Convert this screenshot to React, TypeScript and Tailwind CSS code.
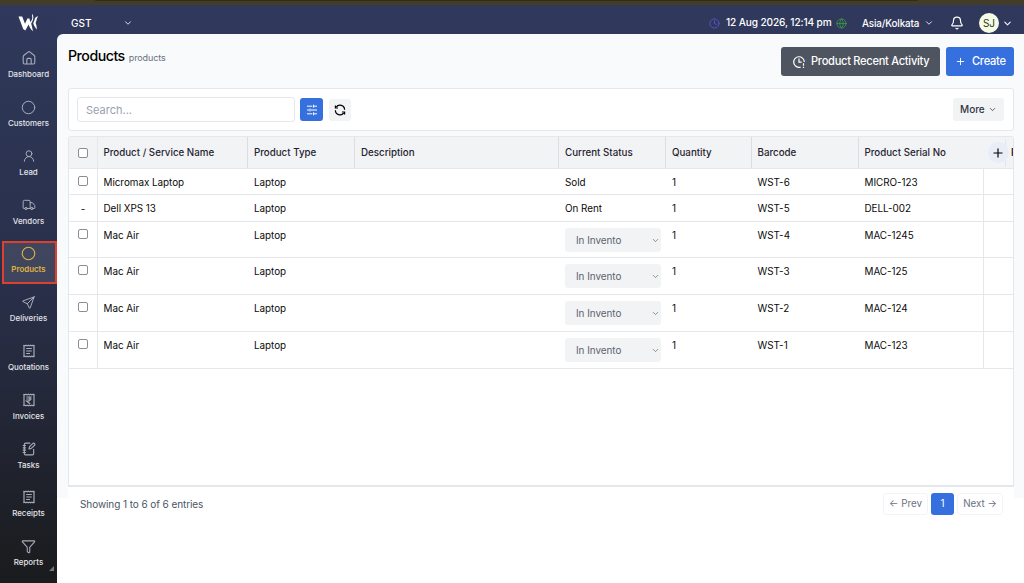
import type { ReactNode } from 'react';
import { Bell, ChevronDown, Circle, Clock, Funnel, Globe, NotebookPen, Plus, Truck, UserRound } from 'lucide-react';
import { TbSend } from 'react-icons/tb';

interface Product {
  name: string;
  status: string;
  barcode: string;
  serial: string;
  selectable: boolean;
  editable: boolean;
}

const products: Product[] = [
  { name: 'Micromax Laptop', status: 'Sold', barcode: 'WST-6', serial: 'MICRO-123', selectable: true, editable: false },
  { name: 'Dell XPS 13', status: 'On Rent', barcode: 'WST-5', serial: 'DELL-002', selectable: false, editable: false },
  { name: 'Mac Air', status: 'In Invento', barcode: 'WST-4', serial: 'MAC-1245', selectable: true, editable: true },
  { name: 'Mac Air', status: 'In Invento', barcode: 'WST-3', serial: 'MAC-125', selectable: true, editable: true },
  { name: 'Mac Air', status: 'In Invento', barcode: 'WST-2', serial: 'MAC-124', selectable: true, editable: true },
  { name: 'Mac Air', status: 'In Invento', barcode: 'WST-1', serial: 'MAC-123', selectable: true, editable: true },
];

const columns = ['Product / Service Name', 'Product Type', 'Description', 'Current Status', 'Quantity', 'Barcode'];

const grid = 'grid grid-cols-[28.5px_150.5px_107px_204px_107px_85.5px_107px_125.5px_30px]';

function Logo() {
  return (
    <svg width="21" height="19" viewBox="0 0 21 19" fill="white">
      <path d="M0.5 3.4H4.2L7 10.8L9.4 5.6H11.4L12.4 9.2L14 6.4C14.6 4.6 14.2 3.4 14 2.4L14.3 0.8C15.8 3.4 15.6 6 14.4 8.2L13.2 10.4L15 18.2C12.6 16.2 11.4 13.6 10.6 11.4L7.3 17.4L5.2 16Z" />
      <path d="M20.3 3.2C17.8 3.6 16.8 5 16.4 7.4L15.2 10.2C16 12.6 17 14.6 19 16.4C18.6 13.6 18.4 11.6 17.6 10C18.8 7.8 18.4 5 20.3 3.2Z" />
    </svg>
  );
}

function HomeIcon() {
  return (
    <svg width="14" height="14" viewBox="0 0 14 14" fill="none" stroke="currentColor" strokeWidth="1.1" strokeLinejoin="round">
      <path d="M1.2 5.8C1.2 5.1 1.5 4.7 2 4.3L6 1.1C6.6 .6 7.4 .6 8 1.1L12 4.3C12.5 4.7 12.8 5.1 12.8 5.8V11.6C12.8 12.5 12.3 13 11.4 13H2.6C1.7 13 1.2 12.5 1.2 11.6Z" />
      <path d="M4.8 13V8.7C4.8 7.8 5.2 7.4 6 7.4H8C8.8 7.4 9.2 7.8 9.2 8.7V13" />
    </svg>
  );
}

function ReceiptIcon({ rupee = false }: { rupee?: boolean }) {
  return (
    <svg width="14" height="14" viewBox="0 0 14 14" fill="none" stroke="currentColor" strokeWidth="1.15">
      <path d="M2 1.3V12.7M12 1.3V12.7" />
      <path d="M1.5 1.2L2.7 1.9L3.9 1.2L5.1 1.9L6.3 1.2L7.5 1.9L8.7 1.2L9.9 1.9L11.1 1.2L12.4 1.9M1.5 12.8L2.7 12.1L3.9 12.8L5.1 12.1L6.3 12.8L7.5 12.1L8.7 12.8L9.9 12.1L11.1 12.8L12.4 12.1" />
      {rupee ? <path d="M4.3 4H9.7M4.3 6H9.7M4.5 4H6C9 4 9 8 6 8H4.5L8.2 11" /> : <path d="M4.2 4.5H9.8M4.2 7H9.8M4.2 9.5H8" />}
    </svg>
  );
}

function SlidersIcon() {
  return (
    <svg width="12" height="12" viewBox="0 0 12 12" fill="none" stroke="currentColor" strokeWidth="1">
      <path d="M1 2.2H6.3M8 2.2H11M1 6H3.3M5 6H11M1 9.8H6.3M8 9.8H11M7.6 .7V3.7M4 4.5V7.5M7.6 8.3V11.3" />
    </svg>
  );
}

function RefreshIcon() {
  return (
    <svg width="12" height="12" viewBox="0 0 12 12" fill="none" stroke="currentColor" strokeWidth="1.2">
      <path d="M2.2 3.2A4.6 4.6 0 0 1 10.6 5.8M9.8 8.8A4.6 4.6 0 0 1 1.4 6.2" />
      <path d="M1.4 1.5V4H4M10.6 10.5V8H8" />
    </svg>
  );
}

function ActivityIcon() {
  return (
    <svg width="14" height="14" viewBox="0 0 14 14" fill="none" stroke="currentColor" strokeWidth="1.2">
      <path d="M8.6 12.1A5.3 5.3 0 1 1 12.3 7M7 3.5V7.2H9.7" />
      <path d="M11.5 8.3V10.7M11.5 11.7V13" />
    </svg>
  );
}

interface NavItemProps {
  label: string;
  icon: ReactNode;
  active?: boolean;
}

function NavItem({ label, icon, active = false }: NavItemProps) {
  return (
    <a
      className={
        active
          ? 'flex h-[48.8px] flex-col items-center pt-[6px] text-[#e0b341]'
          : 'flex h-[48.8px] flex-col items-center pt-[6px] text-[#a9adba]'
      }
    >
      <span className="flex h-[14px] items-center">{icon}</span>
      <span className={active ? 'mt-[3px] text-[7.9px]/[12px] font-semibold' : 'mt-[3px] text-[7.9px]/[12px] font-medium text-[#e3e4e8]'}>{label}</span>
    </a>
  );
}

function Sidebar() {
  return (
    <aside className="relative w-[57px] shrink-0 bg-linear-to-b from-[#30395c] via-[#292f49] via-50% to-[#1a1b1d]">
      <div className="flex h-[40.3px] justify-center pt-[8px]">
        <Logo />
      </div>
      <nav>
        <NavItem label="Dashboard" icon={<HomeIcon />} />
        <NavItem label="Customers" icon={<Circle size={15} strokeWidth={1.6} />} />
        <NavItem label="Lead" icon={<UserRound size={14} strokeWidth={1.7} />} />
        <NavItem label="Vendors" icon={<Truck size={14} strokeWidth={1.7} />} />
        <div className="relative">
          <div className="absolute top-[1px] left-[2px] h-[43px] w-[55px] border-2 border-[#dd402c] bg-white/10" />
          <div className="relative">
            <NavItem label="Products" icon={<Circle size={15} strokeWidth={1.8} />} active />
          </div>
        </div>
        <NavItem label="Deliveries" icon={<TbSend size={15} strokeWidth={1.6} />} />
        <NavItem label="Quotations" icon={<ReceiptIcon />} />
        <NavItem label="Invoices" icon={<ReceiptIcon rupee />} />
        <NavItem label="Tasks" icon={<NotebookPen size={14} strokeWidth={1.9} />} />
        <NavItem label="Receipts" icon={<ReceiptIcon />} />
        <NavItem label="Reports" icon={<Funnel size={15} strokeWidth={1.7} />} />
      </nav>
      <svg className="absolute right-[3px] bottom-[12px]" width="5" height="5" viewBox="0 0 5 5">
        <path d="M5 0V5H0Z" fill="#777" />
      </svg>
    </aside>
  );
}

function TopBar() {
  return (
    <header className="flex h-[29px] items-center bg-[#30395c] pt-[7px] pr-[11px] pl-[14px] text-[10px] text-white">
      <span className="w-[52px] font-medium">GST</span>
      <ChevronDown size={10} strokeWidth={2} />
      <div className="ml-auto flex items-center">
        <Clock size={11} strokeWidth={2} className="text-[#5954cf]" />
        <span className="ml-[6px] w-[106px] text-[10.1px] font-medium tracking-[-0.12px] whitespace-nowrap">12 Aug 2026, 12:14 pm</span>
        <Globe size={11} strokeWidth={1.9} className="ml-[4px] text-[#3d9446]" />
        <span className="ml-[15px] w-[62px] text-[9.9px] font-medium tracking-[-0.15px]">Asia/Kolkata</span>
        <ChevronDown size={10} strokeWidth={2} />
        <Bell size={14} strokeWidth={2} className="ml-[16px]" />
        <span className="ml-[15px] flex size-[20px] items-center justify-center rounded-full bg-[#f4fce3] text-[10px] text-[#333]">SJ</span>
        <ChevronDown size={11} strokeWidth={2.2} className="ml-[3px]" />
      </div>
    </header>
  );
}

function Checkbox() {
  return <input type="checkbox" className="block size-[10px] appearance-none rounded-[2px] border border-[#8e8e92] bg-white" />;
}

function TableHeader() {
  return (
    <div className={`${grid} h-[32px] border-b border-gray-200 bg-[#f2f3f5] text-[9.75px] font-medium text-[#1f2430]`}>
      <div className="flex items-center border-r border-gray-200 pl-[9px]">
        <Checkbox />
      </div>
      {columns.map((column) => (
        <div key={column} className="flex items-center border-r-[1.5px] border-[#dcdde1] pt-px pl-[6px]">
          {column}
        </div>
      ))}
      <div className="flex items-center pt-px pl-[6px]">Product Serial No</div>
      <div className="relative flex items-center">
        <span className="absolute top-[2px] left-[21px] h-[28px] w-px bg-gray-200" />
        <span className="absolute left-[3.5px] flex size-[21px] items-center justify-center rounded-full bg-[#e8edf8] text-black">
          <Plus size={14} strokeWidth={2} />
        </span>
        <span className="absolute left-[27px] pt-px font-semibold">P</span>
      </div>
    </div>
  );
}

function TableRow({ product }: { product: Product }) {
  return (
    <div
      className={
        product.editable
          ? `${grid} h-[36.7px] border-b border-gray-200 text-[9.9px]/[15px] tracking-[-0.03px] text-[#0a0a0a]`
          : `${grid} h-[26.4px] border-b border-gray-200 text-[9.9px]/[15px] tracking-[-0.03px] text-[#0a0a0a]`
      }
    >
      <div className="border-r border-gray-200 pt-[7px] pl-[9px]">
        {product.selectable ? <Checkbox /> : <span className="block w-[10px] text-center leading-[14px]">-</span>}
      </div>
      <div className="pt-[6px] pl-[6px]">{product.name}</div>
      <div className="pt-[6px] pl-[6px]">Laptop</div>
      <div />
      <div className="pt-[6px] pl-[6px]">
        {product.editable ? (
          <div className="flex h-[24px] w-[96px] items-center justify-between rounded-[3px] bg-[#f2f3f5] pt-px pr-px pl-[11px] text-[#5c6370]">
            {product.status}
            <ChevronDown size={9} strokeWidth={1.8} />
          </div>
        ) : (
          product.status
        )}
      </div>
      <div className="pt-[6px] pl-[6px]">1</div>
      <div className="pt-[6px] pl-[6px]">{product.barcode}</div>
      <div className="border-r border-gray-200 pt-[6px] pl-[6px]">{product.serial}</div>
      <div />
    </div>
  );
}

export default function App() {
  return (
    <div className="flex h-[583px] w-[1024px] flex-col overflow-hidden bg-[#30395c] font-['Inter',sans-serif]">
      <div className="h-[5px] shrink-0 bg-[#423c28]">
        <div className="ml-[95px] h-px w-[823px] rounded-b bg-[#302d18]" />
      </div>
      <div className="flex min-h-0 flex-1">
        <Sidebar />
        <div className="flex min-w-0 flex-1 flex-col">
          <TopBar />
          <main className="flex-1 rounded-tl-[6px] bg-linear-to-b from-[#f9fafb] from-[464px] to-white to-[464px] pr-[10px] pl-[11px]">
            <div className="flex h-[54px] justify-between">
              <div className="flex items-baseline gap-[4px] pt-[11px]">
                <h1 className="text-[14.2px]/[22px] font-medium tracking-[-0.5px] text-black">Products</h1>
                <span className="text-[9px] tracking-[-0.1px] text-gray-500">products</span>
              </div>
              <div className="flex gap-[6px] pt-[13px] text-[11.1px] font-medium tracking-[-0.28px]">
                <button type="button" className="flex h-[29px] w-[159px] items-center gap-[5px] rounded-[3px] bg-[#4e5460] pl-[11px] whitespace-nowrap text-white">
                  <ActivityIcon />
                  Product Recent Activity
                </button>
                <button type="button" className="flex h-[29px] w-[68px] items-center gap-[6px] rounded-[3px] bg-[#3670df] pl-[9px] text-white">
                  <Plus size={11} strokeWidth={2} />
                  Create
                </button>
              </div>
            </div>
            <section className="flex h-[43px] items-center rounded-[3px] border border-gray-200 bg-white px-[9px] pl-[8px]">
              <input
                placeholder="Search..."
                className="mr-[5px] h-[25px] w-[218px] rounded-[3px] border border-gray-200 px-[8px] text-[11px] placeholder:text-gray-400"
              />
              <button type="button" className="flex size-[23px] items-center justify-center rounded-[3px] bg-[#3670df] text-white">
                <SlidersIcon />
              </button>
              <button type="button" className="ml-[6px] flex size-[22px] items-center justify-center rounded-[3px] bg-[#f2f3f5] text-black">
                <RefreshIcon />
              </button>
              <button type="button" className="ml-auto flex h-[23px] w-[51px] items-center gap-[3px] rounded-[3px] bg-[#f2f3f5] pl-[7px] text-[10px] font-medium text-[#303642]">
                More
                <ChevronDown size={9} strokeWidth={2} />
              </button>
            </section>
            <section className="mt-[5px] h-[351px] overflow-hidden rounded-t-[3px] border border-b-2 border-gray-200 bg-white">
              <TableHeader />
              {products.map((product) => (
                <TableRow key={product.barcode} product={product} />
              ))}
            </section>
            <footer className="flex h-[34px] items-center justify-between bg-white pr-[11px] pl-[12px] text-[10px] text-gray-600">
              <span className="tracking-[-0.08px]">Showing 1 to 6 of 6 entries</span>
              <div className="flex gap-[3px] text-[9.8px] text-gray-500">
                <button type="button" className="h-[22px] w-[45px] rounded-[3px] border border-gray-100">← Prev</button>
                <button type="button" className="h-[22px] w-[23px] rounded-[3px] bg-[#3670df] text-white">1</button>
                <button type="button" className="h-[22px] w-[46px] rounded-[3px] border border-gray-100">Next →</button>
              </div>
            </footer>
          </main>
        </div>
      </div>
    </div>
  );
}
